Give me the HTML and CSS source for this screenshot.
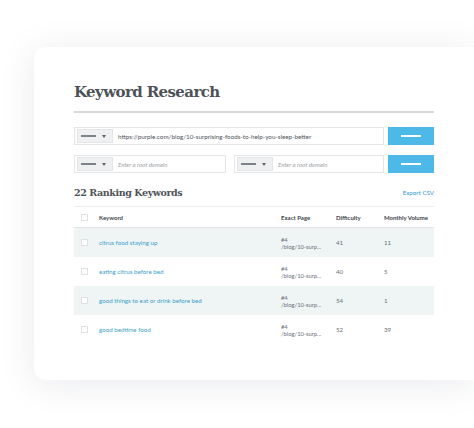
FILE: index.html
```html
<!DOCTYPE html>
<html>
<head>
<meta charset="utf-8">
<link rel="stylesheet" href="styles.css">
</head>
<body>
<div class="card">
  <div class="content">
    <h1 class="title">Keyword Research</h1>
    <div class="rule"></div>
    <div class="search">
      <div class="row">
        <div class="field wide">
          <span class="select"><span class="dash"></span><span class="caret"></span></span>
          <span class="value">https://purple.com/blog/10-surprising-foods-to-help-you-sleep-better</span>
        </div>
        <div class="btn"><span class="bar"></span></div>
      </div>
      <div class="row">
        <div class="field half1">
          <span class="select"><span class="dash"></span><span class="caret"></span></span>
          <span class="placeholder">Enter a root domain</span>
        </div>
        <div class="field half2">
          <span class="select"><span class="dash"></span><span class="caret"></span></span>
          <span class="placeholder">Enter a root domain</span>
        </div>
        <div class="btn"><span class="bar"></span></div>
      </div>
    </div>
    <div class="section-head">
      <h2 class="subtitle">22 Ranking Keywords</h2>
      <span class="export">Export CSV</span>
    </div>
    <div class="table">
      <div class="tr head">
        <div class="cell"><span class="check"></span></div>
        <div class="cell">Keyword</div>
        <div class="cell">Exact Page</div>
        <div class="cell">Difficulty</div>
        <div class="cell">Monthly Volume</div>
      </div>
      <div class="tr shaded">
        <div class="cell"><span class="check"></span></div>
        <div class="cell kw">citrus food staying up</div>
        <div class="cell page"><span>#4</span><span>/blog/10-surp...</span></div>
        <div class="cell num">41</div>
        <div class="cell num">11</div>
      </div>
      <div class="tr">
        <div class="cell"><span class="check"></span></div>
        <div class="cell kw">eating citrus before bed</div>
        <div class="cell page"><span>#4</span><span>/blog/10-surp...</span></div>
        <div class="cell num">40</div>
        <div class="cell num">5</div>
      </div>
      <div class="tr shaded">
        <div class="cell"><span class="check"></span></div>
        <div class="cell kw">good things to eat or drink before bed</div>
        <div class="cell page"><span>#4</span><span>/blog/10-surp...</span></div>
        <div class="cell num">54</div>
        <div class="cell num">1</div>
      </div>
      <div class="tr">
        <div class="cell"><span class="check"></span></div>
        <div class="cell kw">good bedtime food</div>
        <div class="cell page"><span>#4</span><span>/blog/10-surp...</span></div>
        <div class="cell num">52</div>
        <div class="cell num">39</div>
      </div>
    </div>
  </div>
</div>
</body>
</html>
```
FILE: styles.css
```css
html, body {
  margin: 0;
  padding: 0;
  background: #ffffff;
  overflow: hidden;
  width: 474px;
  height: 428px;
}
body {
  font-family: Lato, "Liberation Sans", sans-serif;
  color: #555b62;
}
.card {
  margin: 47px 0 0 34px;
  width: 440px;
  height: 333px;
  box-sizing: border-box;
  padding: 33px 0 0 40px;
  background: #ffffff;
  border-radius: 12px 0 0 12px;
  box-shadow: 0 4px 36px rgba(40, 50, 80, 0.1);
}
.content {
  width: 360px;
}
.title {
  margin: 0;
  font-family: "DejaVu Serif", "Liberation Serif", serif;
  font-weight: bold;
  font-size: 15px;
  letter-spacing: -0.6px;
  line-height: 24px;
  color: #4d5258;
}
.rule {
  margin-top: 7px;
  height: 2px;
  background: #d6d8db;
}
.search {
  margin-top: 14px;
  display: flex;
  flex-direction: column;
  gap: 10px;
}
.row {
  display: flex;
  gap: 4px;
  height: 18px;
}
.field {
  box-sizing: border-box;
  border: 1px solid #e3e5e8;
  background: #fff;
  display: flex;
  align-items: center;
  padding-left: 2px;
  gap: 5px;
  overflow: hidden;
}
.wide { width: 310px; }
.half1 { width: 152px; margin-right: 4px; }
.half2 { width: 150px; }
.select {
  flex: none;
  width: 36px;
  height: 14px;
  box-sizing: border-box;
  background: #eef0f2;
  border: 1px solid #e3e5e8;
  display: flex;
  align-items: center;
  padding-left: 3px;
  gap: 6px;
}
.dash {
  width: 15px;
  height: 1.5px;
  background: #7d8389;
}
.caret {
  width: 0;
  height: 0;
  border-left: 2.5px solid transparent;
  border-right: 2.5px solid transparent;
  border-top: 3px solid #5d636a;
}
.value {
  font-size: 6.3px;
  color: #4e545b;
  white-space: nowrap;
}
.placeholder {
  font-size: 6px;
  font-style: italic;
  color: #9a9fa5;
  white-space: nowrap;
}
.btn {
  width: 46px;
  flex: none;
  background: #4cb9e9;
  display: flex;
  align-items: center;
  justify-content: center;
}
.bar {
  width: 20px;
  height: 2px;
  background: #ffffff;
}
.section-head {
  margin-top: 11px;
  height: 22px;
  box-sizing: border-box;
  padding-bottom: 6px;
  display: flex;
  justify-content: space-between;
  align-items: center;
}
.subtitle {
  margin: 0;
  font-family: "DejaVu Serif", "Liberation Serif", serif;
  font-weight: bold;
  font-size: 9.5px;
  letter-spacing: -0.4px;
  color: #4d5258;
}
.export {
  font-size: 6.2px;
  color: #2f97c9;
}
.table {
  border-top: 1px solid #eceef0;
}
.tr {
  display: grid;
  grid-template-columns: 25px 182px 55px 48px 50px;
  height: 29px;
  align-items: center;
  font-size: 6.2px;
}
.tr.head {
  height: 20px;
  border-bottom: 1px solid #e2e5e8;
  font-weight: bold;
  color: #3f444b;
  font-size: 6px;
}
.tr.shaded {
  background: #eff4f5;
}
.cell {
  white-space: nowrap;
}
.check {
  display: block;
  margin-left: 7px;
  width: 7px;
  height: 7px;
  box-sizing: border-box;
  border: 1px solid #dfe2e5;
  background: #fff;
}
.kw {
  color: #3a9fca;
}
.page {
  display: flex;
  flex-direction: column;
  color: #6a7077;
  font-size: 5.8px;
  line-height: 7px;
}
.num {
  color: #6a7077;
}
```
